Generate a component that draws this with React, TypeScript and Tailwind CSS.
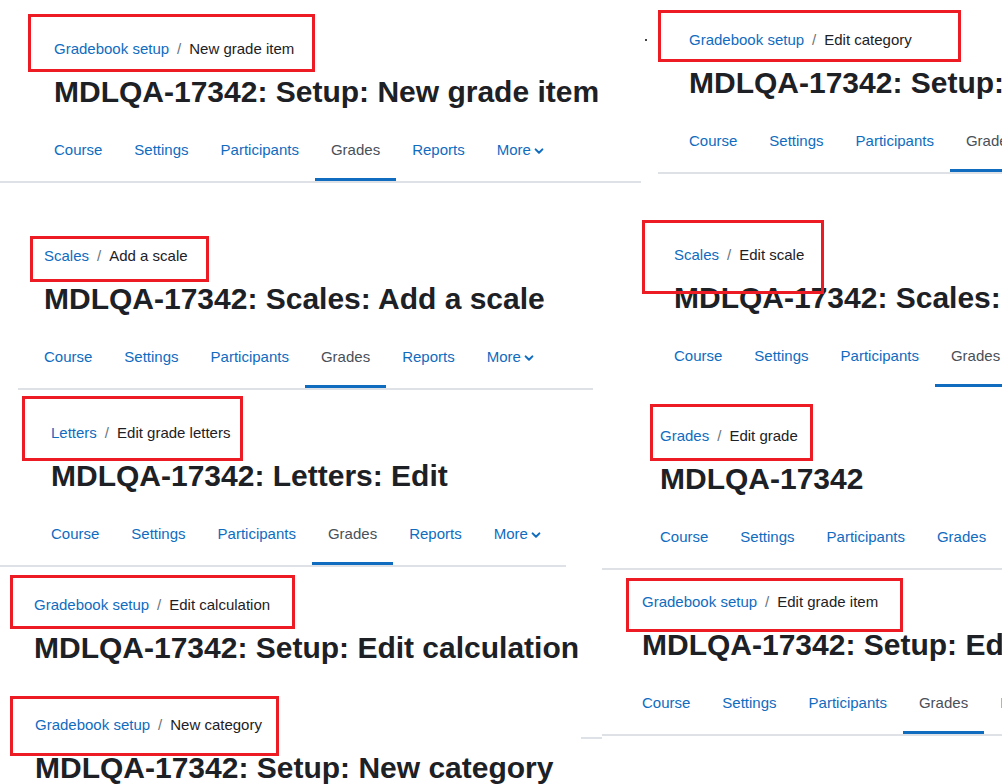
import React from "react";

type PanelProps = {
  pos: string;
  padL: string;
  padT: string;
  crumb: string;
  current: string;
  heading: string;
  active: number | null;
  line?: boolean;
};

const TABS = ["Course", "Settings", "Participants", "Grades", "Reports", "More"];

function Chevron() {
  return (
    <svg width="10" height="10" viewBox="0 0 10 10" className="ml-[3px] mt-[2px]" aria-hidden="true">
      <path d="M1.6 3.4 L5 6.8 L8.4 3.4" fill="none" stroke="#0f6cbf" strokeWidth="2" strokeLinecap="round" strokeLinejoin="round" />
    </svg>
  );
}

function Panel({ pos, padL, padT, crumb, current, heading, active, line = true }: PanelProps) {
  return (
    <div className={`absolute overflow-hidden bg-white ${pos} ${padT}`}>
      <div className={padL}>
        <div className="h-[22px] whitespace-nowrap text-[15px] leading-[22px]">
          <span className="text-[#0f6cbf]">{crumb}</span>
          <span className="px-2 text-[#6a737b]">/</span>
          <span className="text-[#1d2125]">{current}</span>
        </div>
        <h1 className="mt-[14px] h-[36px] whitespace-nowrap text-[30px] font-bold leading-[36px] text-[#1d2125]">
          {heading}
        </h1>
      </div>
      <div className={`mt-[11px] ${padL} ${line ? "border-b-2 border-[#dee2e6]" : "border-b-2 border-transparent"}`}>
        <ul className="-ml-4 flex whitespace-nowrap">
          {TABS.map((t, i) => (
            <li
              key={t}
              className={`flex h-[60px] shrink-0 items-center border-b-[3px] px-4 text-[15px] leading-[22px] ${
                i === active ? "border-[#0f6cbf] text-[#495057]" : "border-transparent text-[#0f6cbf]"
              }`}
            >
              {t}
              {t === "More" && <Chevron />}
            </li>
          ))}
        </ul>
      </div>
    </div>
  );
}

export default function App() {
  return (
    <div className="relative h-[784px] w-[1004px] overflow-hidden bg-white font-['Liberation_Sans',Arial,sans-serif]">
      <Panel
        pos="left-0 top-0 w-[641px]"
        padL="pl-[54px]"
        padT="pt-[38px]"
        crumb="Gradebook setup"
        current="New grade item"
        heading="MDLQA-17342: Setup: New grade item"
        active={3}
      />
      <Panel
        pos="left-[658px] top-0 w-[344px]"
        padL="pl-[31px]"
        padT="pt-[29px]"
        crumb="Gradebook setup"
        current="Edit category"
        heading="MDLQA-17342: Setup: Edit category"
        active={3}
      />
      <Panel
        pos="left-[18px] top-[190px] w-[575px]"
        padL="pl-[26px]"
        padT="pt-[55px]"
        crumb="Scales"
        current="Add a scale"
        heading="MDLQA-17342: Scales: Add a scale"
        active={3}
      />
      <Panel
        pos="left-[642px] top-[190px] w-[360px]"
        padL="pl-[32px]"
        padT="pt-[54px]"
        crumb="Scales"
        current="Edit scale"
        heading="MDLQA-17342: Scales: Edit scale"
        active={3}
        line={false}
      />
      <Panel
        pos="left-0 top-[392px] w-[566px]"
        padL="pl-[51px]"
        padT="pt-[30px]"
        crumb="Letters"
        current="Edit grade letters"
        heading="MDLQA-17342: Letters: Edit"
        active={3}
      />
      <Panel
        pos="left-[602px] top-[395px] w-[400px]"
        padL="pl-[58px]"
        padT="pt-[30px]"
        crumb="Grades"
        current="Edit grade"
        heading="MDLQA-17342"
        active={null}
      />
      <Panel
        pos="left-0 top-[572px] w-[602px]"
        padL="pl-[34px]"
        padT="pt-[22px]"
        crumb="Gradebook setup"
        current="Edit calculation"
        heading="MDLQA-17342: Setup: Edit calculation"
        active={3}
      />
      <Panel
        pos="left-[602px] top-[572px] w-[400px]"
        padL="pl-[40px]"
        padT="pt-[19px]"
        crumb="Gradebook setup"
        current="Edit grade item"
        heading="MDLQA-17342: Setup: Edit grade item"
        active={3}
      />
      <Panel
        pos="left-0 top-[690px] w-[581px]"
        padL="pl-[35px]"
        padT="pt-[24px]"
        crumb="Gradebook setup"
        current="New category"
        heading="MDLQA-17342: Setup: New category"
        active={3}
      />

      {/* stray dot */}
      <div className="absolute left-[645px] top-[39px] h-[2px] w-[2px] bg-[#444]" />

      {/* red highlight boxes */}
      <div className="absolute left-[28px] top-[14px] h-[58px] w-[287px] border-[3px] border-[#ed1c24]" />
      <div className="absolute left-[658px] top-[10px] h-[52px] w-[303px] border-[3px] border-[#ed1c24]" />
      <div className="absolute left-[30px] top-[236px] h-[46px] w-[179px] border-[3px] border-[#ed1c24]" />
      <div className="absolute left-[642px] top-[220px] h-[74px] w-[182px] border-[3px] border-[#ed1c24]" />
      <div className="absolute left-[22px] top-[396px] h-[65px] w-[221px] border-[3px] border-[#ed1c24]" />
      <div className="absolute left-[650px] top-[404px] h-[57px] w-[163px] border-[3px] border-[#ed1c24]" />
      <div className="absolute left-[10px] top-[575px] h-[54px] w-[285px] border-[3px] border-[#ed1c24]" />
      <div className="absolute left-[10px] top-[696px] h-[60px] w-[269px] border-[3px] border-[#ed1c24]" />
      <div className="absolute left-[626px] top-[578px] h-[54px] w-[277px] border-[3px] border-[#ed1c24]" />
    </div>
  );
}
